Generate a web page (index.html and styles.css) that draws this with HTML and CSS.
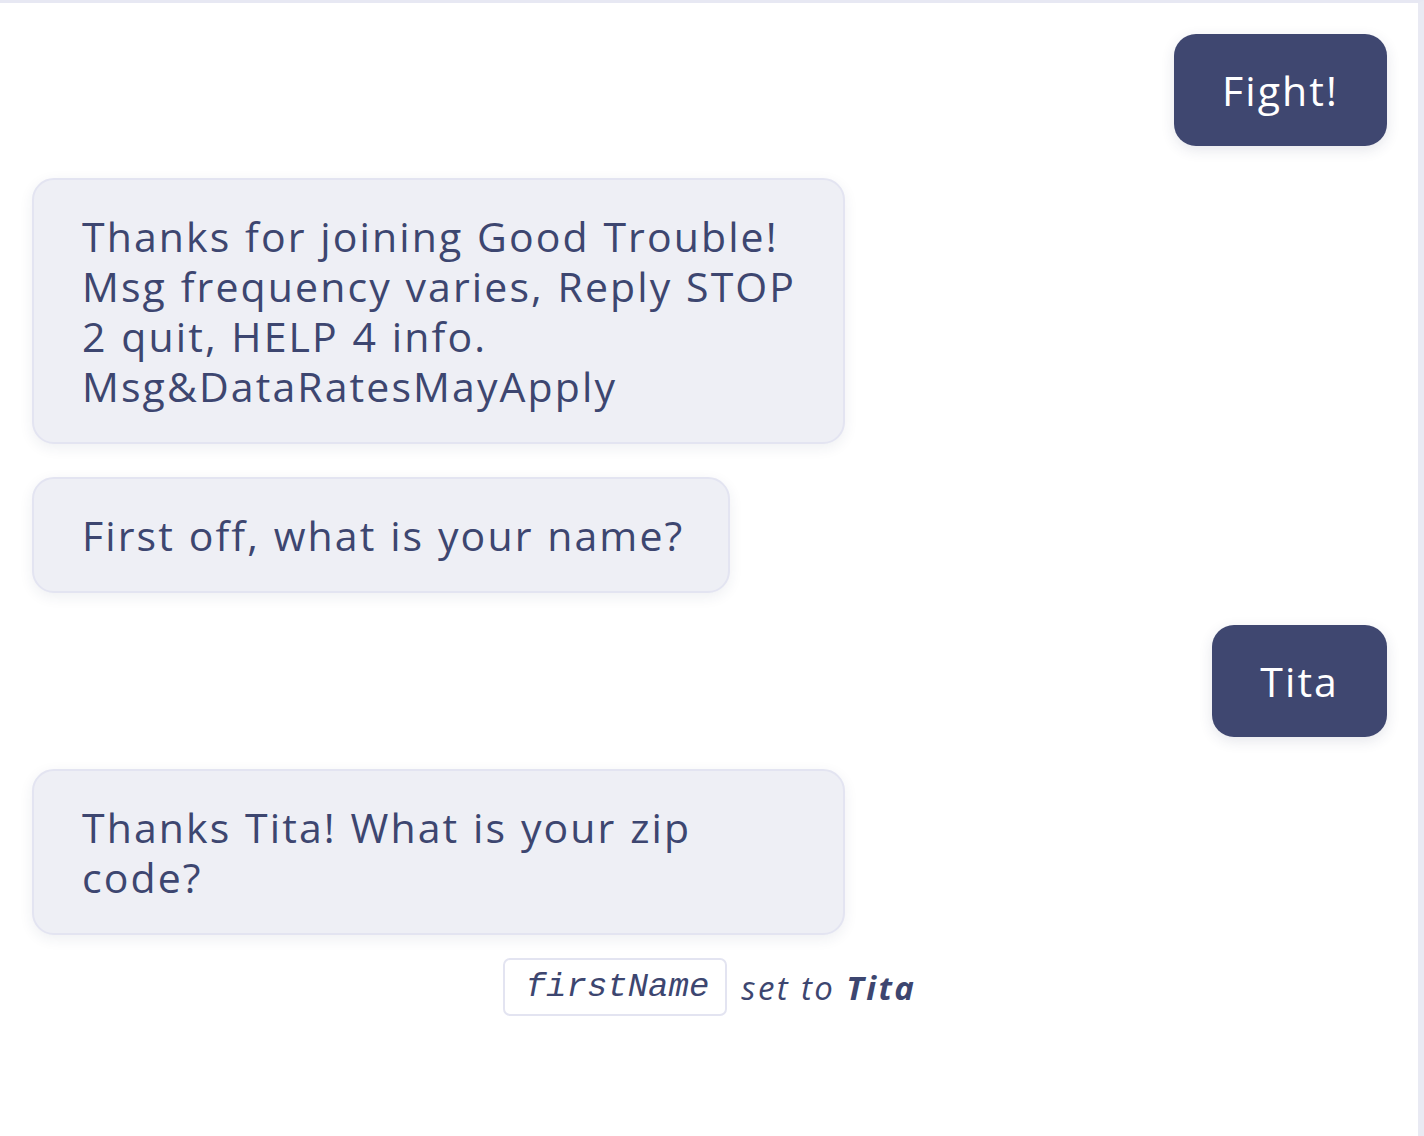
FILE: index.html
```html
<!DOCTYPE html>
<html lang="en">
<head>
  <meta charset="UTF-8" />
  <meta name="viewport" content="width=device-width, initial-scale=1.0" />
  <title>Good Trouble Chat Preview</title>
  <link rel="stylesheet" href="styles.css">
</head>
<body>
  <div class="preview">
    <div class="chat">
      <div class="bubble outgoing">Fight!</div>
      <div class="bubble incoming">Thanks for joining Good Trouble! Msg frequency varies, Reply STOP 2 quit, HELP 4 info. Msg&amp;DataRatesMayApply</div>
      <div class="bubble incoming">First off, what is your name?</div>
      <div class="bubble outgoing">Tita</div>
      <div class="bubble incoming">Thanks Tita! What is your zip code?</div>
      <div class="variable-note">
        <span class="variable">firstName</span>
        <span class="note-text">set to <strong>Tita</strong></span>
      </div>
    </div>
  </div>
</body>
</html>
```

FILE: styles.css
```css
body {
  margin: 0;
  font-family: 'Open Sans', 'Noto Sans', sans-serif;
  background: #ffffff;
  color: #3d4670;
}
.preview {
  height: 100vh;
  box-sizing: border-box;
  border-top: 3px solid #e7e8f3;
  border-right: 6px solid #e9eaf3;
  overflow: hidden;
}
.chat {
  display: flex;
  flex-direction: column;
  align-items: flex-start;
  gap: 32px;
  padding: 31px 31px 31px 32px;
}
.bubble {
  max-width: 60%;
  box-sizing: border-box;
  padding: 31px 44px 31px 48px;
  font-size: 41px;
  line-height: 50px;
  letter-spacing: 2.1px;
  word-spacing: 1px;
  border-radius: 22px;
}
.incoming {
  background: #eeeff5;
  border: 2px solid #e3e4f1;
  box-shadow: 0 4px 14px rgba(40, 46, 90, 0.08);
}
.outgoing {
  align-self: flex-end;
  padding-right: 48px;
  background: #3f4770;
  color: #ffffff;
  box-shadow: 0 4px 14px rgba(40, 46, 90, 0.12);
}
.chat .incoming + .incoming {
  margin-top: 1px;
}
.variable-note {
  align-self: center;
  display: flex;
  align-items: center;
  gap: 14px;
  margin-top: -9px;
  font-style: italic;
  font-size: 33px;
  letter-spacing: 2.4px;
}
.variable {
  font-family: 'Liberation Mono', monospace;
  font-size: 34px;
  letter-spacing: 0;
  padding: 8px 16px 8px 21px;
  border: 2px solid #e3e4f1;
  border-radius: 7px;
}
.note-text strong {
  font-weight: 700;
}
```
